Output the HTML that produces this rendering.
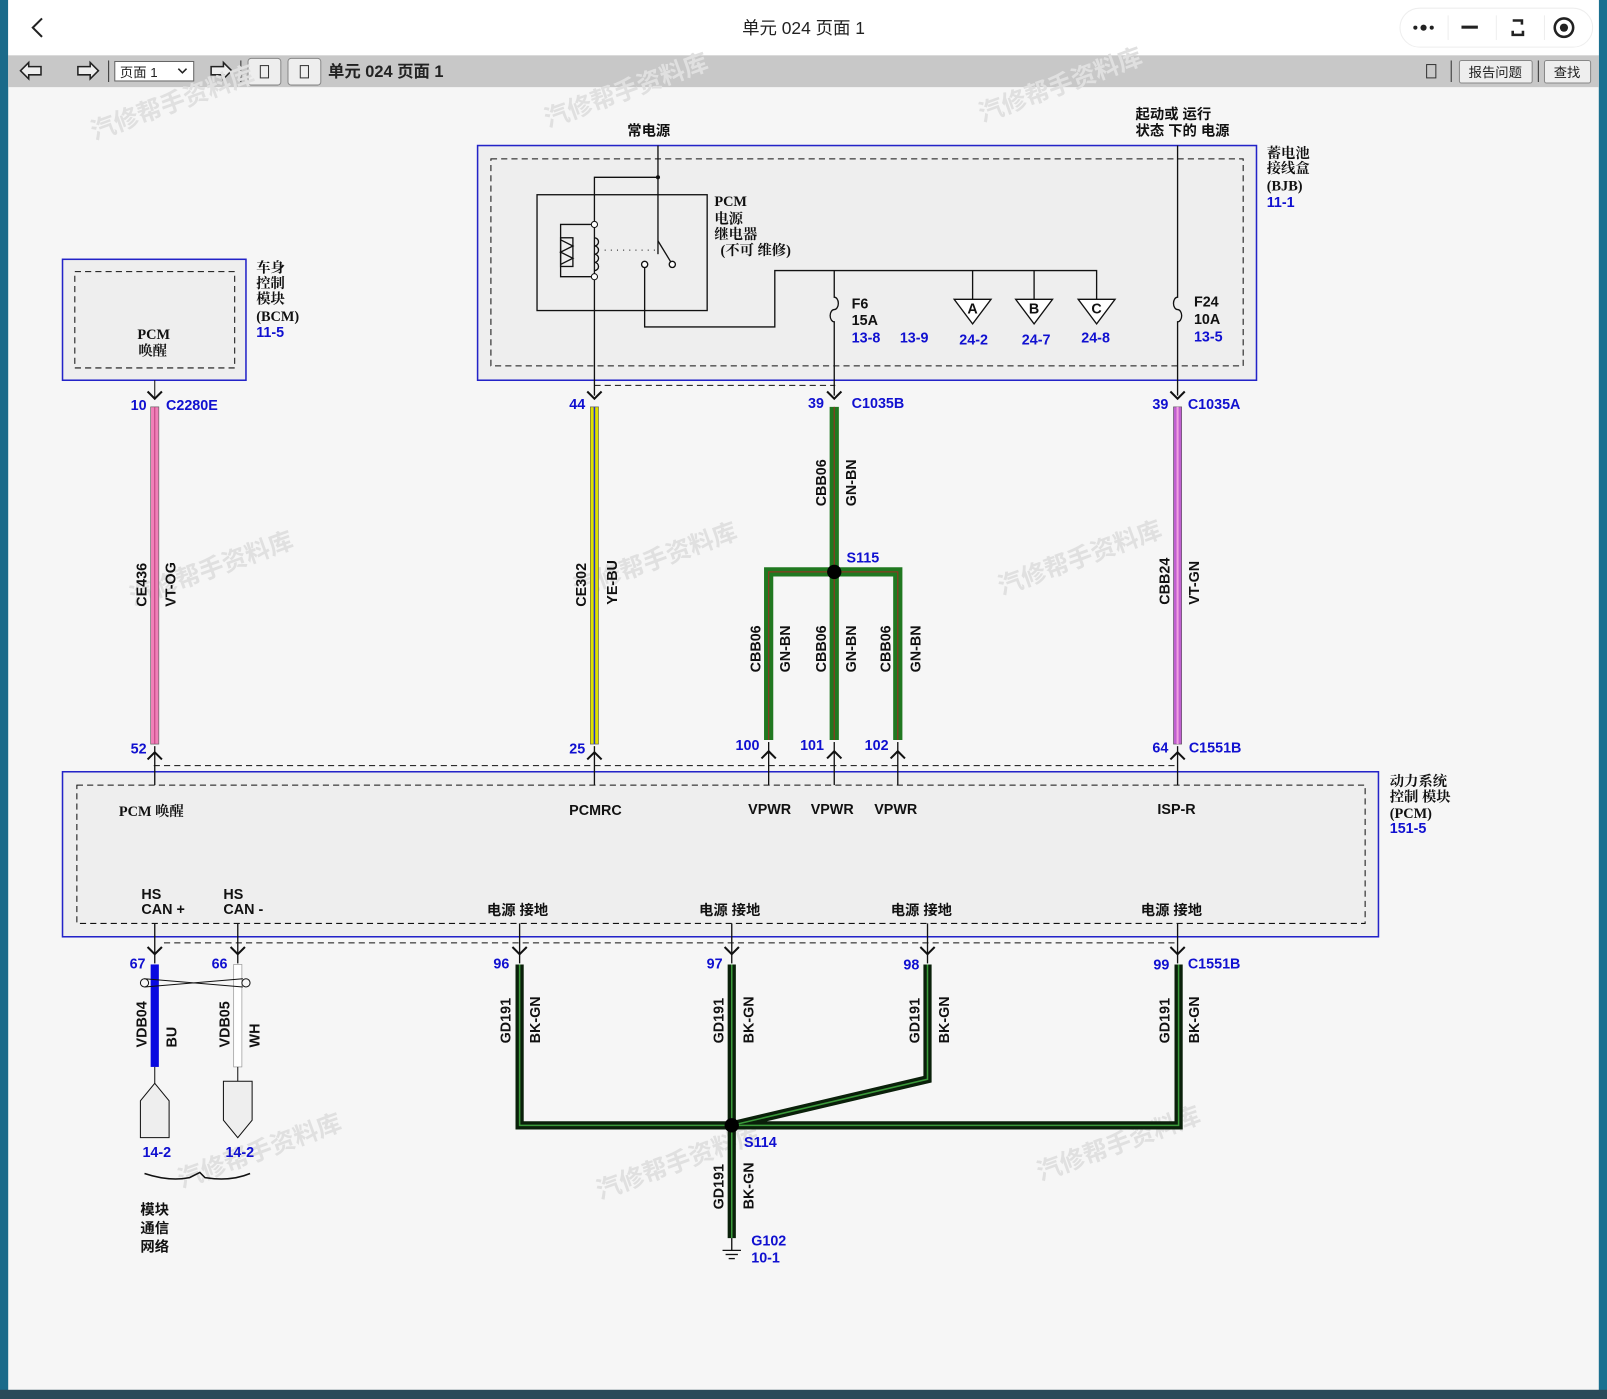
<!DOCTYPE html>
<html><head><meta charset="utf-8"><style>
html,body{margin:0;padding:0;width:1607px;height:1399px;overflow:hidden;background:#f6f6f6}
svg{display:block}
text{font-family:"Liberation Sans","Noto Sans CJK SC",sans-serif}
.b{fill:#1010d0;font-weight:bold;font-size:14px}
.k{fill:#111;font-weight:bold;font-size:14px}
.s{fill:#111;font-family:"Liberation Serif","Noto Serif CJK SC",serif;font-size:14px;font-weight:bold}
.wm{fill:#e0e0e0;font-size:24px;font-weight:bold}
</style></head><body>
<svg width="1607" height="1399" viewBox="0 0 1568 1365" preserveAspectRatio="none" xmlns="http://www.w3.org/2000/svg">
<rect x="0" y="0" width="1568" height="1365" fill="#f6f6f6"/>
<rect x="0" y="0" width="8" height="1365" fill="#1a6a8a"/>
<rect x="1560" y="0" width="8" height="1365" fill="#1a7090"/>
<rect x="0" y="1356" width="1568" height="9" fill="#2a4a5a"/>
<rect x="8" y="0" width="1552" height="54" fill="#fff"/>
<path d="M41 18 L32 27 L41 36" fill="none" stroke="#222" stroke-width="2"/>
<text x="784" y="33" text-anchor="middle" font-size="17" fill="#222">单元 024 页面 1</text>
<rect x="1366" y="8" width="188" height="38" rx="19" fill="#fff" stroke="#eee"/>
<circle cx="1381" cy="27" r="2" fill="#222"/><circle cx="1389" cy="27" r="3" fill="#222"/><circle cx="1397" cy="27" r="2" fill="#222"/>
<line x1="1413" y1="15" x2="1413" y2="39" stroke="#eee"/>
<rect x="1426" y="25" width="16" height="3" fill="#222"/>
<line x1="1460" y1="15" x2="1460" y2="39" stroke="#eee"/>
<path d="M1476 20 h9 v4 M1486 30 v4 h-10 v-4" fill="none" stroke="#222" stroke-width="2.5"/>
<line x1="1507" y1="15" x2="1507" y2="39" stroke="#eee"/>
<circle cx="1526" cy="27" r="9" fill="none" stroke="#222" stroke-width="2.5"/><circle cx="1526" cy="27" r="4" fill="#222"/>
<rect x="8" y="54" width="1552" height="31" fill="#c8c8c8"/>
<path d="M20 69 l8 -8 v4 h12 v8 h-12 v4 z" fill="#eee" stroke="#222" stroke-width="1.5"/>
<path d="M96 69 l-8 -8 v4 h-12 v8 h12 v4 z" fill="#eee" stroke="#222" stroke-width="1.5"/>
<line x1="106" y1="59" x2="106" y2="80" stroke="#333"/>
<rect x="112" y="60" width="77" height="19" fill="#fff" stroke="#666"/>
<text x="117" y="75" font-size="13" fill="#222">页面 1</text>
<path d="M174 67 l4 4 l4 -4" fill="none" stroke="#222" stroke-width="1.5"/>
<path d="M226 69 l-8 -8 v4 h-12 v8 h12 v4 z" fill="#eee" stroke="#222" stroke-width="1.5"/>
<line x1="235" y1="59" x2="235" y2="80" stroke="#333"/>
<rect x="242" y="57" width="32" height="26" rx="3" fill="#eee" stroke="#888"/><rect x="254" y="64" width="8" height="12" fill="none" stroke="#333"/>
<rect x="281" y="57" width="32" height="26" rx="3" fill="#eee" stroke="#888"/><rect x="293" y="64" width="8" height="12" fill="none" stroke="#333"/>
<text x="320" y="75" font-size="16" font-weight="bold" fill="#222">单元 024 页面 1</text>
<rect x="1392" y="63" width="9" height="13" fill="none" stroke="#333"/>
<line x1="1416" y1="59" x2="1416" y2="80" stroke="#333"/>
<rect x="1424" y="59" width="71" height="22" rx="2" fill="#eee" stroke="#888"/><text x="1459" y="75" text-anchor="middle" font-size="13" fill="#222">报告问题</text>
<line x1="1501" y1="59" x2="1501" y2="80" stroke="#333"/>
<rect x="1507" y="59" width="45" height="22" rx="2" fill="#eee" stroke="#888"/><text x="1529" y="75" text-anchor="middle" font-size="13" fill="#222">查找</text>

<g transform="rotate(-20)" class="wm">
<text x="40" y="160">汽修帮手资料库</text><text x="460" y="300">汽修帮手资料库</text><text x="860" y="440">汽修帮手资料库</text>
<text x="-80" y="600">汽修帮手资料库</text><text x="330" y="740">汽修帮手资料库</text><text x="720" y="880">汽修帮手资料库</text>
<text x="-160" y="880">汽修帮手资料库</text><text x="230" y="1020">汽修帮手资料库</text><text x="640" y="1160">汽修帮手资料库</text>
<text x="-230" y="1150">汽修帮手资料库</text><text x="150" y="1300">汽修帮手资料库</text><text x="560" y="1430">汽修帮手资料库</text>
</g>

<rect x="61" y="253" width="179" height="118" fill="#eee" stroke="#2323c8" stroke-width="1.5"/>
<rect x="73" y="265" width="156" height="94" fill="none" stroke="#111" stroke-dasharray="6,4"/>
<text x="150" y="331" text-anchor="middle" class="s">PCM</text>
<text x="149" y="347" text-anchor="middle" class="s">唤醒</text>
<text x="250" y="266" class="s">车身</text><text x="250" y="281" class="s">控制</text><text x="250" y="296" class="s">模块</text>
<text x="250" y="313" class="s">(BCM)</text><text x="250" y="329" class="b">11-5</text>

<rect x="466" y="142" width="760" height="229" fill="#eee" stroke="#2323c8" stroke-width="1.5"/>
<rect x="479" y="155" width="734" height="202" fill="none" stroke="#111" stroke-dasharray="6,4"/>
<text x="1236" y="154" class="s">蓄电池</text><text x="1236" y="169" class="s">接线盒</text>
<text x="1236" y="186" class="s">(BJB)</text><text x="1236" y="202" class="b">11-1</text>
<text x="633" y="132" text-anchor="middle" class="k" font-size="15">常电源</text>
<text x="1108" y="116" class="k" font-size="15">起动或 运行</text>
<text x="1108" y="132" class="k" font-size="15">状态 下的 电源</text>
<g fill="none" stroke="#111" stroke-width="1.3">
<line x1="642" y1="142" x2="642" y2="248"/>
<path d="M580 386 V173 H642"/>
<rect x="524" y="190" width="166" height="113"/>
<path d="M580 219 H547 V270 H580"/>
<rect x="547" y="232" width="12" height="28"/>
<path d="M547 234 l12 6 l-12 6 l12 6 l-12 6"/>
<path d="M580 232 a4 4 0 0 1 0 8 a4 4 0 0 1 0 8 a4 4 0 0 1 0 8 a4 4 0 0 1 0 8"/>
<line x1="642" y1="235" x2="656" y2="258"/>
<circle cx="629" cy="258" r="3" fill="#fff"/><circle cx="656" cy="258" r="3" fill="#fff"/>
<path d="M629 261 V319 H756 V264 H1070 V292"/>
<path d="M814 264 V290 a4 6 0 0 1 0 12 a4 6 0 0 0 0 12 V386"/>
<path d="M949 264 V292 M1009 264 V292"/>
<path d="M1149 142 V290 a4 6 0 0 0 0 12 a4 6 0 0 1 0 12 V386"/>
</g>
<line x1="590" y1="244" x2="640" y2="244" stroke="#111" stroke-dasharray="1,5"/>
<circle cx="642" cy="173" r="2" fill="#111"/><circle cx="580" cy="219" r="3" fill="#fff" stroke="#111"/><circle cx="580" cy="270" r="3" fill="#fff" stroke="#111"/>
<g fill="#fff" stroke="#111" stroke-width="1.3">
<path d="M931 292 h36 l-18 24 z"/><path d="M991 292 h36 l-18 24 z"/><path d="M1052 292 h36 l-18 24 z"/>
</g>
<text x="949" y="306" text-anchor="middle" class="k">A</text><text x="1009" y="306" text-anchor="middle" class="k">B</text><text x="1070" y="306" text-anchor="middle" class="k">C</text>
<text x="697" y="201" class="s">PCM</text><text x="697" y="218" class="s">电源</text><text x="697" y="233" class="s">继电器</text><text x="703" y="249" class="s">(不可 维修)</text>
<text x="831" y="301" class="k">F6</text><text x="831" y="317" class="k">15A</text><text x="831" y="334" class="b">13-8</text>
<text x="878" y="334" class="b">13-9</text><text x="936" y="336" class="b">24-2</text><text x="997" y="336" class="b">24-7</text><text x="1055" y="334" class="b">24-8</text>
<text x="1165" y="299" class="k">F24</text><text x="1165" y="316" class="k">10A</text><text x="1165" y="333" class="b">13-5</text>

<line x1="580" y1="376" x2="815" y2="376" stroke="#111" stroke-dasharray="6,4"/>
<line x1="151" y1="371" x2="151" y2="390" stroke="#111"/>

<g fill="none" stroke="#111" stroke-width="2">
<path d="M144 382 l7 7 l7 -7"/><path d="M573 382 l7 7 l7 -7"/><path d="M807 382 l7 7 l7 -7"/><path d="M1142 382 l7 7 l7 -7"/>
</g>
<text x="143" y="400" text-anchor="end" class="b">10</text><text x="162" y="400" class="b">C2280E</text>
<text x="571" y="399" text-anchor="end" class="b">44</text>
<text x="804" y="398" text-anchor="end" class="b">39</text><text x="831" y="398" class="b">C1035B</text>
<text x="1140" y="399" text-anchor="end" class="b">39</text><text x="1159" y="399" class="b">C1035A</text>

<rect x="147" y="397" width="8" height="329" fill="#f080b8" stroke="#555" stroke-width="0.6"/><line x1="151" y1="397" x2="151" y2="726" stroke="#c04080" stroke-width="1"/>
<rect x="576" y="397" width="8" height="329" fill="#e0e000" stroke="#555" stroke-width="0.6"/><line x1="580" y1="397" x2="580" y2="726" stroke="#2030d0" stroke-width="1.5"/>
<rect x="1145" y="397" width="8" height="329" fill="#c060d0" stroke="#555" stroke-width="0.6"/><line x1="1149" y1="397" x2="1149" y2="726" stroke="#f0a0e0" stroke-width="2"/>
<g fill="none" stroke-linejoin="miter">
<path d="M814 397 V722 M750 722 V558 H876 V722" stroke="#207820" stroke-width="9"/>
<path d="M814 397 V722 M750 722 V558 H876 V722" stroke="#8a3a20" stroke-width="1.2"/>
</g>
<circle cx="814" cy="558" r="7" fill="#000"/>
<text x="826" y="549" class="b">S115</text>

<g class="k" font-size="13">
<text transform="translate(143,592) rotate(-90)">CE436</text><text transform="translate(171,592) rotate(-90)">VT-OG</text>
<text transform="translate(572,592) rotate(-90)">CE302</text><text transform="translate(602,590) rotate(-90)">YE-BU</text>
<text transform="translate(806,494) rotate(-90)">CBB06</text><text transform="translate(835,494) rotate(-90)">GN-BN</text>
<text transform="translate(742,656) rotate(-90)">CBB06</text><text transform="translate(771,656) rotate(-90)">GN-BN</text>
<text transform="translate(806,656) rotate(-90)">CBB06</text><text transform="translate(835,656) rotate(-90)">GN-BN</text>
<text transform="translate(869,656) rotate(-90)">CBB06</text><text transform="translate(898,656) rotate(-90)">GN-BN</text>
<text transform="translate(1141,590) rotate(-90)">CBB24</text><text transform="translate(1170,590) rotate(-90)">VT-GN</text>
</g>

<text x="143" y="735" text-anchor="end" class="b">52</text>
<text x="571" y="735" text-anchor="end" class="b">25</text>
<text x="741" y="732" text-anchor="end" class="b">100</text><text x="804" y="732" text-anchor="end" class="b">101</text><text x="867" y="732" text-anchor="end" class="b">102</text>
<text x="1140" y="734" text-anchor="end" class="b">64</text><text x="1160" y="734" class="b">C1551B</text>
<g fill="none" stroke="#111" stroke-width="2">
<path d="M144 741 l7 -7 l7 7"/><path d="M573 741 l7 -7 l7 7"/><path d="M743 740 l7 -7 l7 7"/><path d="M807 740 l7 -7 l7 7"/><path d="M869 740 l7 -7 l7 7"/><path d="M1142 741 l7 -7 l7 7"/>
</g>
<line x1="150" y1="747" x2="1150" y2="747" stroke="#111" stroke-dasharray="6,4"/>

<rect x="61" y="753" width="1284" height="161" fill="#eee" stroke="#2323c8" stroke-width="1.5"/>
<rect x="75" y="766" width="1257" height="135" fill="none" stroke="#111" stroke-dasharray="6,4"/>
<g stroke="#111" stroke-width="1.3">
<line x1="151" y1="728" x2="151" y2="766"/><line x1="580" y1="728" x2="580" y2="766"/><line x1="750" y1="724" x2="750" y2="766"/><line x1="814" y1="724" x2="814" y2="766"/><line x1="876" y1="724" x2="876" y2="766"/><line x1="1149" y1="728" x2="1149" y2="766"/>
<line x1="151" y1="901" x2="151" y2="940"/><line x1="232" y1="901" x2="232" y2="940"/><line x1="507" y1="901" x2="507" y2="940"/><line x1="714" y1="901" x2="714" y2="940"/><line x1="905" y1="901" x2="905" y2="940"/><line x1="1149" y1="901" x2="1149" y2="940"/>
</g>
<text x="116" y="796" class="s">PCM 唤醒</text>
<text x="581" y="795" text-anchor="middle" class="k">PCMRC</text>
<text x="751" y="794" text-anchor="middle" class="k">VPWR</text><text x="812" y="794" text-anchor="middle" class="k">VPWR</text><text x="874" y="794" text-anchor="middle" class="k">VPWR</text>
<text x="1148" y="794" text-anchor="middle" class="k">ISP-R</text>
<text x="1356" y="767" class="s">动力系统</text><text x="1356" y="782" class="s">控制 模块</text><text x="1356" y="798" class="s">(PCM)</text><text x="1356" y="813" class="b">151-5</text>
<text x="138" y="877" class="k">HS</text><text x="138" y="892" class="k">CAN +</text>
<text x="218" y="877" class="k">HS</text><text x="218" y="892" class="k">CAN -</text>
<text x="505" y="893" text-anchor="middle" class="k">电源 接地</text><text x="712" y="893" text-anchor="middle" class="k">电源 接地</text>
<text x="899" y="893" text-anchor="middle" class="k">电源 接地</text><text x="1143" y="893" text-anchor="middle" class="k">电源 接地</text>
<line x1="160" y1="920" x2="1150" y2="920" stroke="#111" stroke-dasharray="6,4"/>
<g fill="none" stroke="#111" stroke-width="2">
<path d="M144 924 l7 7 l7 -7"/><path d="M225 924 l7 7 l7 -7"/><path d="M500 924 l7 7 l7 -7"/><path d="M707 924 l7 7 l7 -7"/><path d="M898 924 l7 7 l7 -7"/><path d="M1142 924 l7 7 l7 -7"/>
</g>
<text x="142" y="945" text-anchor="end" class="b">67</text><text x="222" y="945" text-anchor="end" class="b">66</text>
<text x="497" y="945" text-anchor="end" class="b">96</text><text x="705" y="945" text-anchor="end" class="b">97</text>
<text x="897" y="946" text-anchor="end" class="b">98</text><text x="1141" y="946" text-anchor="end" class="b">99</text><text x="1159" y="945" class="b">C1551B</text>

<rect x="147" y="941" width="8" height="100" fill="#0a0ae0"/>
<rect x="228" y="941" width="8" height="100" fill="#fff" stroke="#999" stroke-width="0.7"/>
<path d="M141 955 L237 963 M141 963 L237 955" stroke="#111" stroke-width="1"/>
<circle cx="141" cy="959" r="4" fill="none" stroke="#111"/><circle cx="240" cy="959" r="4" fill="none" stroke="#111"/>
<line x1="151" y1="1041" x2="151" y2="1057" stroke="#111"/><line x1="232" y1="1041" x2="232" y2="1055" stroke="#111"/>
<path d="M151 1057 L165 1074 V1110 H137 V1074 Z" fill="#eee" stroke="#111"/>
<path d="M218 1055 H246 V1093 L232 1110 L218 1093 Z" fill="#eee" stroke="#111"/>
<text x="153" y="1129" text-anchor="middle" class="b">14-2</text><text x="234" y="1129" text-anchor="middle" class="b">14-2</text>
<path d="M141 1145 Q165 1153 185 1149 L195 1144 L200 1149 Q225 1153 244 1145" fill="none" stroke="#111" stroke-width="1.5"/>
<text x="137" y="1185" class="k">模块</text><text x="137" y="1203" class="k">通信</text><text x="137" y="1221" class="k">网络</text>
<g class="k" font-size="13">
<text transform="translate(143,1022) rotate(-90)">VDB04</text><text transform="translate(172,1022) rotate(-90)">BU</text>
<text transform="translate(224,1022) rotate(-90)">VDB05</text><text transform="translate(253,1022) rotate(-90)">WH</text>
</g>

<g fill="none" stroke-linejoin="miter">
<path d="M507 941 V1098 H1150 V941 M714 941 V1208 M905 941 V1053 L714 1098" stroke="#0a200a" stroke-width="8"/>
<path d="M507 941 V1098 H1150 V941 M714 941 V1208 M905 941 V1053 L714 1098" stroke="#3a9a3a" stroke-width="1.5"/>
</g>
<circle cx="714" cy="1098" r="7" fill="#000"/>
<text x="726" y="1119" class="b">S114</text>
<g class="k" font-size="13">
<text transform="translate(498,1018) rotate(-90)">GD191</text><text transform="translate(527,1018) rotate(-90)">BK-GN</text>
<text transform="translate(706,1018) rotate(-90)">GD191</text><text transform="translate(735,1018) rotate(-90)">BK-GN</text>
<text transform="translate(897,1018) rotate(-90)">GD191</text><text transform="translate(926,1018) rotate(-90)">BK-GN</text>
<text transform="translate(1141,1018) rotate(-90)">GD191</text><text transform="translate(1170,1018) rotate(-90)">BK-GN</text>
<text transform="translate(706,1180) rotate(-90)">GD191</text><text transform="translate(735,1180) rotate(-90)">BK-GN</text>
</g>
<g stroke="#111" stroke-width="1.3"><line x1="714" y1="1208" x2="714" y2="1220"/><line x1="705" y1="1220" x2="723" y2="1220"/><line x1="708" y1="1224" x2="720" y2="1224"/><line x1="711" y1="1228" x2="717" y2="1228"/></g>
<text x="733" y="1215" class="b">G102</text><text x="733" y="1232" class="b">10-1</text>
</svg>
</body></html>
